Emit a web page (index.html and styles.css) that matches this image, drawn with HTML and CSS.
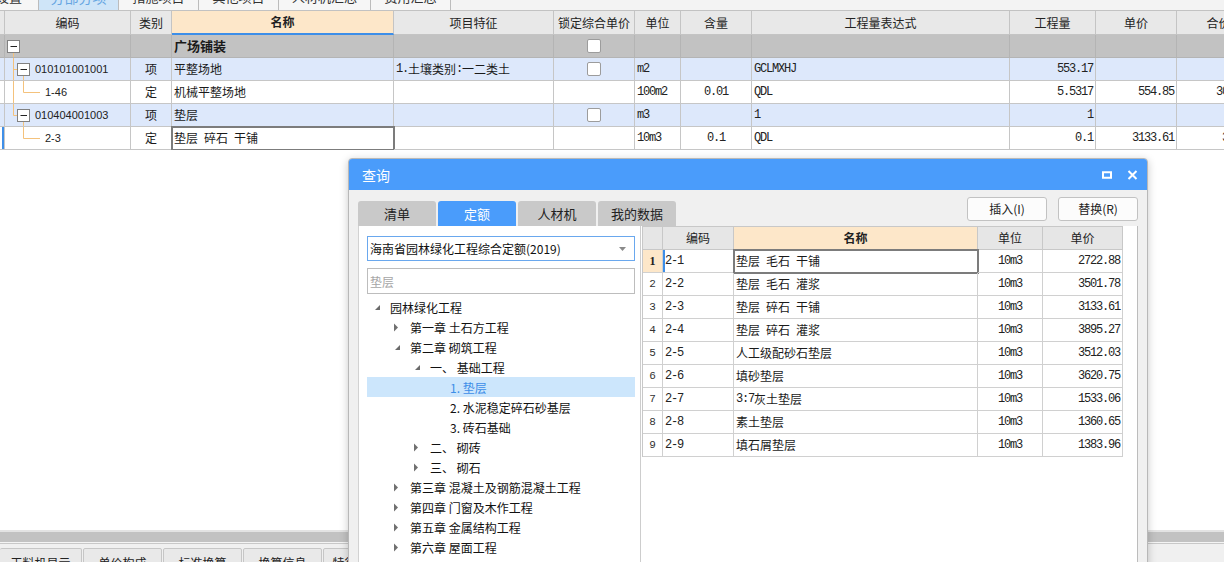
FILE: index.html
```html
<!DOCTYPE html>
<html lang="zh-CN">
<head>
<meta charset="utf-8">
<title>分部分项 - 查询</title>
<link rel="stylesheet" href="styles.css">
</head>
<body>
<div class="app">
  <div class="toptabs">
    <div class="ttab first">设置</div>
    <div class="ttab active">分部分项</div>
    <div class="ttab">措施项目</div>
    <div class="ttab">其他项目</div>
    <div class="ttab wide">人材机汇总</div>
    <div class="ttab">费用汇总</div>
  </div>

  <div class="grid">
    <div class="row head">
      <div class="c strip"></div>
      <div class="c ctr">编码</div>
      <div class="c ctr">类别</div>
      <div class="c ctr name-h">名称</div>
      <div class="c ctr">项目特征</div>
      <div class="c ctr">锁定综合单价</div>
      <div class="c ctr">单位</div>
      <div class="c ctr">含量</div>
      <div class="c ctr">工程量表达式</div>
      <div class="c ctr">工程量</div>
      <div class="c ctr">单价</div>
      <div class="c ctr">合价</div>
    </div>

    <div class="row grp">
      <div class="c strip"></div>
      <div class="c code"><svg class="tl" width="30" height="22" viewBox="0 0 30 22"><path d="M8.5 18V22" class="ol"/><rect x="2.5" y="5.5" width="12" height="12" class="bx"/><path d="M5.5 11.5H12" class="mn"/></svg></div>
      <div class="c"></div>
      <div class="c bold">广场铺装</div>
      <div class="c"></div>
      <div class="c ctr"><span class="cb"></span></div>
      <div class="c"></div>
      <div class="c"></div>
      <div class="c"></div>
      <div class="c"></div>
      <div class="c"></div>
      <div class="c"></div>
    </div>

    <div class="row item">
      <div class="c strip"></div>
      <div class="c code"><svg class="tl" width="30" height="22" viewBox="0 0 30 22"><path d="M8.5 0V22M8.5 11.5H12.5M18.5 18V22" class="ol"/><rect x="12.5" y="5.5" width="12" height="12" class="bx"/><path d="M15.5 11.5H22" class="mn"/></svg><span class="sans">010101001001</span></div>
      <div class="c ctr">项</div>
      <div class="c">平整场地</div>
      <div class="c"><span class="mono">1.</span>土壤类别<span class="mono">:</span>一二类土</div>
      <div class="c ctr"><span class="cb"></span></div>
      <div class="c mono">m2</div>
      <div class="c"></div>
      <div class="c mono">GCLMXHJ</div>
      <div class="c r mono">553.17</div>
      <div class="c"></div>
      <div class="c"></div>
    </div>

    <div class="row sub">
      <div class="c strip"></div>
      <div class="c code"><svg class="tl" width="40" height="22" viewBox="0 0 40 22"><path d="M8.5 0V22M18.5 0V11.5M18.5 11.5H35" class="ol"/></svg><span class="sans">1-46</span></div>
      <div class="c ctr">定</div>
      <div class="c">机械平整场地</div>
      <div class="c"></div>
      <div class="c"></div>
      <div class="c mono">100m2</div>
      <div class="c ctr mono">0.01</div>
      <div class="c mono">QDL</div>
      <div class="c r mono">5.5317</div>
      <div class="c r mono">554.85</div>
      <div class="c r mono">3069.26</div>
    </div>

    <div class="row item">
      <div class="c strip"></div>
      <div class="c code"><svg class="tl" width="30" height="22" viewBox="0 0 30 22"><path d="M8.5 0V11.5M8.5 11.5H12.5M18.5 18V22" class="ol"/><rect x="12.5" y="5.5" width="12" height="12" class="bx"/><path d="M15.5 11.5H22" class="mn"/></svg><span class="sans">010404001003</span></div>
      <div class="c ctr">项</div>
      <div class="c">垫层</div>
      <div class="c"></div>
      <div class="c ctr"><span class="cb"></span></div>
      <div class="c mono">m3</div>
      <div class="c"></div>
      <div class="c mono">1</div>
      <div class="c r mono">1</div>
      <div class="c"></div>
      <div class="c"></div>
    </div>

    <div class="row sub cur">
      <div class="c strip mark"></div>
      <div class="c code"><svg class="tl" width="40" height="22" viewBox="0 0 40 22"><path d="M18.5 0V11.5M18.5 11.5H35" class="ol"/></svg><span class="sans">2-3</span></div>
      <div class="c ctr">定</div>
      <div class="c edit">垫层&ensp;碎石&ensp;干铺</div>
      <div class="c"></div>
      <div class="c"></div>
      <div class="c mono">10m3</div>
      <div class="c ctr mono">0.1</div>
      <div class="c mono">QDL</div>
      <div class="c r mono">0.1</div>
      <div class="c r mono">3133.61</div>
      <div class="c r mono">313.36</div>
    </div>
  </div>

  <div class="blank"></div>
  <div class="hscroll"><div class="hthumb"></div></div>
  <div class="bottombar">
    <div class="btab">工料机显示</div>
    <div class="btab">单价构成</div>
    <div class="btab">标准换算</div>
    <div class="btab">换算信息</div>
    <div class="btab">特征及内容</div>
  </div>

  <div class="dialog">
    <div class="dtitle">
      <span class="dt-text">查询</span>
      <span class="dt-icons">
        <svg width="10" height="8" viewBox="0 0 10 8"><rect x="1" y="1.25" width="8" height="5.5" fill="none" stroke="#fff" stroke-width="2"/></svg>
        <svg width="11" height="10" viewBox="0 0 11 10"><path d="M1.5 1L9.5 9M9.5 1L1.5 9" stroke="#fff" stroke-width="2" fill="none"/></svg>
      </span>
    </div>
    <div class="dbody">
      <div class="dtop">
        <div class="dtabs">
          <div class="dtab">清单</div>
          <div class="dtab on">定额</div>
          <div class="dtab">人材机</div>
          <div class="dtab">我的数据</div>
        </div>
        <div class="dbtns">
          <div class="btn">插入(I)</div>
          <div class="btn">替换(R)</div>
        </div>
      </div>
      <div class="dpanel">
        <div class="lpanel">
          <div class="select"><span>海南省园林绿化工程综合定额(2019)</span><svg class="caret" width="7" height="4" viewBox="0 0 7 4"><path d="M0 0H7L3.5 4Z" fill="#8a8a8a"/></svg></div>
          <div class="search">垫层</div>
          <div class="tree">
            <div class="tnode l0"><svg class="tw" width="20" height="20" viewBox="0 0 20 20"><path d="M5 13H10V8Z" class="exp"/></svg><span>园林绿化工程</span></div>
            <div class="tnode l1"><svg class="tw" width="20" height="20" viewBox="0 0 20 20"><path d="M4 6.5L8 10.5L4 14.5Z" class="col"/></svg><span>第一章 土石方工程</span></div>
            <div class="tnode l1"><svg class="tw" width="20" height="20" viewBox="0 0 20 20"><path d="M5 13H10V8Z" class="exp"/></svg><span>第二章 砌筑工程</span></div>
            <div class="tnode l2"><svg class="tw" width="20" height="20" viewBox="0 0 20 20"><path d="M5 13H10V8Z" class="exp"/></svg><span>一、 基础工程</span></div>
            <div class="tnode l3 sel"><span>1. 垫层</span></div>
            <div class="tnode l3"><span>2. 水泥稳定碎石砂基层</span></div>
            <div class="tnode l3"><span>3. 砖石基础</span></div>
            <div class="tnode l2"><svg class="tw" width="20" height="20" viewBox="0 0 20 20"><path d="M4 6.5L8 10.5L4 14.5Z" class="col"/></svg><span>二、 砌砖</span></div>
            <div class="tnode l2"><svg class="tw" width="20" height="20" viewBox="0 0 20 20"><path d="M4 6.5L8 10.5L4 14.5Z" class="col"/></svg><span>三、 砌石</span></div>
            <div class="tnode l1"><svg class="tw" width="20" height="20" viewBox="0 0 20 20"><path d="M4 6.5L8 10.5L4 14.5Z" class="col"/></svg><span>第三章 混凝土及钢筋混凝土工程</span></div>
            <div class="tnode l1"><svg class="tw" width="20" height="20" viewBox="0 0 20 20"><path d="M4 6.5L8 10.5L4 14.5Z" class="col"/></svg><span>第四章 门窗及木作工程</span></div>
            <div class="tnode l1"><svg class="tw" width="20" height="20" viewBox="0 0 20 20"><path d="M4 6.5L8 10.5L4 14.5Z" class="col"/></svg><span>第五章 金属结构工程</span></div>
            <div class="tnode l1"><svg class="tw" width="20" height="20" viewBox="0 0 20 20"><path d="M4 6.5L8 10.5L4 14.5Z" class="col"/></svg><span>第六章 屋面工程</span></div>
          </div>
        </div>
        <div class="rpanel">
          <div class="trow thd">
            <div class="t"></div>
            <div class="t ctr">编码</div>
            <div class="t ctr nm">名称</div>
            <div class="t ctr">单位</div>
            <div class="t ctr">单价</div>
          </div>
          <div class="trow first">
            <div class="t ctr num selnum">1</div>
            <div class="t mono codecell">2-1</div>
            <div class="t tedit">垫层&ensp;毛石&ensp;干铺</div>
            <div class="t ctr mono">10m3</div>
            <div class="t r mono">2722.88</div>
          </div>
          <div class="trow">
            <div class="t ctr num">2</div>
            <div class="t mono">2-2</div>
            <div class="t">垫层&ensp;毛石&ensp;灌浆</div>
            <div class="t ctr mono">10m3</div>
            <div class="t r mono">3501.78</div>
          </div>
          <div class="trow">
            <div class="t ctr num">3</div>
            <div class="t mono">2-3</div>
            <div class="t">垫层&ensp;碎石&ensp;干铺</div>
            <div class="t ctr mono">10m3</div>
            <div class="t r mono">3133.61</div>
          </div>
          <div class="trow">
            <div class="t ctr num">4</div>
            <div class="t mono">2-4</div>
            <div class="t">垫层&ensp;碎石&ensp;灌浆</div>
            <div class="t ctr mono">10m3</div>
            <div class="t r mono">3895.27</div>
          </div>
          <div class="trow">
            <div class="t ctr num">5</div>
            <div class="t mono">2-5</div>
            <div class="t">人工级配砂石垫层</div>
            <div class="t ctr mono">10m3</div>
            <div class="t r mono">3512.03</div>
          </div>
          <div class="trow">
            <div class="t ctr num">6</div>
            <div class="t mono">2-6</div>
            <div class="t">填砂垫层</div>
            <div class="t ctr mono">10m3</div>
            <div class="t r mono">3620.75</div>
          </div>
          <div class="trow">
            <div class="t ctr num">7</div>
            <div class="t mono">2-7</div>
            <div class="t"><span class="mono">3:7</span>灰土垫层</div>
            <div class="t ctr mono">10m3</div>
            <div class="t r mono">1533.06</div>
          </div>
          <div class="trow">
            <div class="t ctr num">8</div>
            <div class="t mono">2-8</div>
            <div class="t">素土垫层</div>
            <div class="t ctr mono">10m3</div>
            <div class="t r mono">1360.65</div>
          </div>
          <div class="trow">
            <div class="t ctr num">9</div>
            <div class="t mono">2-9</div>
            <div class="t">填石屑垫层</div>
            <div class="t ctr mono">10m3</div>
            <div class="t r mono">1383.96</div>
          </div>
        </div>
      </div>
    </div>
  </div>
</div>
</body>
</html>
```

FILE: styles.css
```css
* { box-sizing: border-box; margin: 0; padding: 0; }

body {
  width: 1224px;
  height: 562px;
  overflow: hidden;
  background: #fff;
  color: #1a1a1a;
  font-family: "Noto Sans CJK SC", "Microsoft YaHei", sans-serif;
  font-size: 12px;
}

.app {
  position: relative;
  height: 562px;
  display: flex;
  flex-direction: column;
  overflow: hidden;
}

/* ---------- top tabs (mostly scrolled off) ---------- */
.toptabs {
  flex: none;
  height: 11px;
  display: flex;
  overflow: hidden;
  background: #f3f3f3;
  border-bottom: 1px solid #c2c2c2;
}
.ttab {
  flex: none;
  width: 80px;
  height: 26px;
  margin-top: -16px;
  line-height: 26px;
  text-align: center;
  font-size: 13px;
  color: #333;
  background: #f6f6f6;
  border-right: 1px solid #bcbcbc;
}
.ttab.first { width: 60px; margin-left: -21px; text-align: right; padding-right: 16px; }
.ttab.active { background: #cfe5f8; color: #67a6e2; font-size: 14px; }
.ttab.wide { width: 92px; }

/* ---------- main grid ---------- */
.grid { flex: none; overflow: hidden; }
.row {
  display: grid;
  grid-template-columns: 5px 126px 41px 222px 160px 81px 46px 71px 258px 86px 81px 84px;
  height: 23px;
}
.row.head { height: 24px; background: #e8e8e8; }
.c {
  display: flex;
  align-items: center;
  white-space: nowrap;
  overflow: hidden;
  padding: 0 2px;
  line-height: 16px;
  border-right: 1px solid #c6c6c6;
  border-bottom: 1px solid #c6c6c6;
}
.head .c { border-color: #c4c4c4; color: #222; }
.c.ctr { justify-content: center; }
.c.r { justify-content: flex-end; padding-right: 2px; }
.name-h { background: #fde7c9; font-weight: bold; border-bottom: 2px solid #3d8ee8 !important; }
.strip { padding: 0; }
.row.grp { background: #c2c2c2; }
.row.grp .c { border-color: #b4b4b4; }
.row.item { background: #dde8fb; }
.row.sub { background: #fff; }
.bold { font-weight: bold; font-size: 13px; }
.code { padding: 0; }
.tl { flex: none; display: block; }
.ol { stroke: #f4c27c; stroke-width: 1; fill: none; }
.bx { fill: #fff; stroke: #808080; stroke-width: 1; }
.mn { stroke: #222; stroke-width: 1; }
.sans { font-family: "Liberation Sans", Arial, sans-serif; font-size: 11px; color: #222; }
.mono { font-family: "Liberation Mono", "Courier New", monospace; font-size: 12px; letter-spacing: -1.2px; color: #222; white-space: pre; }
.cb {
  display: block;
  width: 14px;
  height: 14px;
  background: #fff;
  border: 1px solid #9c9c9c;
  border-radius: 2px;
}
.strip.mark { box-shadow: inset -2px 0 0 #3f8fe8; }
.edit { outline: 2px solid #7c7c7c; outline-offset: -1px; }

/* ---------- bottom ---------- */
.blank { flex: 1; background: #fff; }
.hscroll {
  flex: none;
  height: 14px;
  background: #f4f4f4;
  border-top: 2px solid #e3e3e3;
  border-bottom: 1px solid #c8c8c8;
}
.hthumb { height: 10px; background: #c2c2c2; }
.bottombar {
  flex: none;
  height: 18px;
  display: flex;
  gap: 1px;
  padding-top: 4px;
  background: #f0f0f0;
  overflow: hidden;
}
.btab {
  flex: none;
  width: 79px;
  height: 28px;
  line-height: 28px;
  text-align: center;
  color: #222;
  background: #e9e9e9;
  border: 1px solid #c6c6c6;
  border-radius: 2px 2px 0 0;
}
.btab:first-child { width: 82px; border-left: none; }

/* ---------- query dialog ---------- */
.dialog {
  position: absolute;
  left: 348px;
  top: 158px;
  width: 800px;
  height: 430px;
  display: flex;
  flex-direction: column;
  background: #f0f0f0;
  border: 1px solid #b8b8b8;
  border-radius: 4px 4px 0 0;
  box-shadow: 0 2px 8px rgba(0, 0, 0, 0.22);
  overflow: hidden;
}
.dtitle {
  flex: none;
  height: 31px;
  display: flex;
  align-items: center;
  justify-content: space-between;
  padding: 0 9px 0 13px;
  background: #4a9cfb;
  color: #fff;
  font-size: 14px;
}
.dt-icons { display: flex; align-items: center; gap: 15px; }
.dt-icons svg { display: block; }

.dbody {
  flex: 1;
  display: flex;
  flex-direction: column;
  padding: 0 9px 0 9px;
}
.dtop {
  flex: none;
  height: 36px;
  display: flex;
  justify-content: space-between;
}
.dtabs { align-self: flex-end; display: flex; gap: 2px; }
.dtab {
  width: 78px;
  height: 25px;
  line-height: 25px;
  text-align: center;
  font-size: 13px;
  color: #222;
  background: #c9c9c9;
  border-radius: 3px 3px 0 0;
}
.dtab.on { background: #4a9cfb; color: #fff; }
.dbtns { display: flex; gap: 11px; margin-top: 7px; align-self: flex-start; }
.btn {
  width: 80px;
  height: 24px;
  line-height: 22px;
  text-align: center;
  color: #222;
  background: #fcfcfc;
  border: 1px solid #c2c2c2;
  border-radius: 3px;
}

.dpanel { flex: 1; display: flex; }
.lpanel {
  flex: none;
  width: 283px;
  background: #fff;
  border-left: 1px solid #d2d2d2;
  border-right: 1px solid #cdcdcd;
  padding: 10px 5px 0 8px;
}
.select {
  height: 25px;
  display: flex;
  align-items: center;
  justify-content: space-between;
  padding: 0 8px 0 2px;
  border: 1px solid #6aa8ee;
  color: #111;
}
.caret { display: block; }
.search {
  height: 26px;
  margin-top: 7px;
  display: flex;
  align-items: center;
  padding-left: 2px;
  border: 1px solid #bdbdbd;
  color: #a6a6a6;
}
.tree { margin-top: 3px; }
.tnode {
  height: 20px;
  display: flex;
  align-items: center;
  white-space: nowrap;
  color: #111;
}
.tnode.l0 { padding-left: 3px; }
.tnode.l1 { padding-left: 23px; }
.tnode.l2 { padding-left: 43px; }
.tnode.l3 { padding-left: 83px; }
.tnode.sel { background: #cce6fc; color: #3d8ee8; }
.tw { flex: none; display: block; }
.exp { fill: #6a6a6a; }
.col { fill: #707070; }

.rpanel {
  flex: 1;
  background: #fff;
  border-right: 1px solid #bcbcbc;
  padding-left: 1px;
}
.trow {
  display: grid;
  grid-template-columns: 20px 71px 244px 65px 80px;
  width: 481px;
  height: 23px;
  border-left: 1px solid #c8c8c8;
}
.trow.thd { height: 24px; border-top: 1px solid #c8c8c8; background: #e6e6e6; }
.t {
  display: flex;
  align-items: center;
  white-space: nowrap;
  overflow: hidden;
  padding: 0 2px;
  line-height: 16px;
  border-right: 1px solid #d0d0d0;
  border-bottom: 1px solid #d0d0d0;
}
.thd .t { border-color: #c8c8c8; color: #222; }
.t.ctr { justify-content: center; }
.t.r { justify-content: flex-end; padding-right: 2px; }
.t.nm { background: #fde7c9; font-weight: bold; }
.num { font-family: "Liberation Mono", monospace; font-size: 11px; color: #333; padding: 0; }
.selnum { background: #fde7c9; font-family: "Liberation Serif", serif; font-weight: bold; font-size: 12px; color: #222; }
.codecell { box-shadow: inset 2px 0 0 #3d8ee8; }
.tedit { outline: 2px solid #7c7c7c; outline-offset: -1px; }
```
